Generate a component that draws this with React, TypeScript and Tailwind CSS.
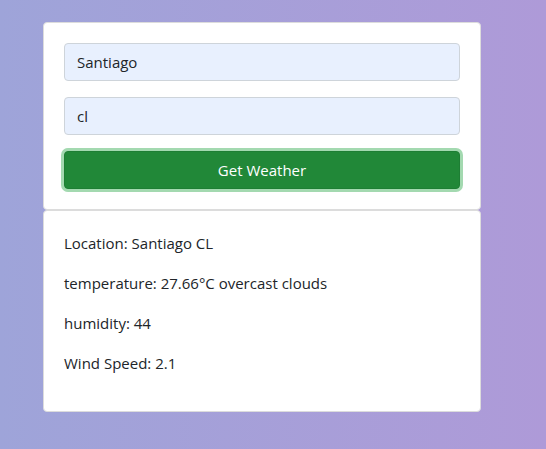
export default function App() {
    const rows = [
        'Location: Santiago CL',
        'temperature: 27.66°C overcast clouds',
        'humidity: 44',
        'Wind Speed: 2.1',
    ];

    return (
        <div
            className="min-h-screen bg-gradient-to-r from-[#9ea4d9] to-[#ae9ad8] pt-[22px] text-[15px] leading-[24px] text-[#212529]"
            style={{ fontFamily: '"Segoe UI", "Open Sans", sans-serif' }}
        >
            <div className="ml-[43px] w-[438px]">
                {/* Formulario */}
                <div className="rounded-[4px] border border-[#dcdcdc] bg-white p-5">
                    <input
                        className="mb-4 block h-[38px] w-full rounded-[4px] border border-[#ced4da] bg-[#e8f0fe] px-3 text-[#212529] outline-none"
                        defaultValue="Santiago"
                    />
                    <input
                        className="mb-4 block h-[38px] w-full rounded-[4px] border border-[#ced4da] bg-[#e8f0fe] px-3 text-[#212529] outline-none"
                        defaultValue="cl"
                    />
                    <button className="block h-[38px] w-full rounded-[4px] border border-[#1e7e34] bg-[#218838] text-white shadow-[0_0_0_3px_rgba(72,180,97,0.5)]">
                        Get Weather
                    </button>
                </div>

                {/* Resultado */}
                <div className="rounded-[4px] border border-[#dcdcdc] bg-white p-5">
                    {rows.map((row, i) => (
                        <p key={i} className="mb-4">
                            {row}
                        </p>
                    ))}
                </div>
            </div>
        </div>
    );
}
